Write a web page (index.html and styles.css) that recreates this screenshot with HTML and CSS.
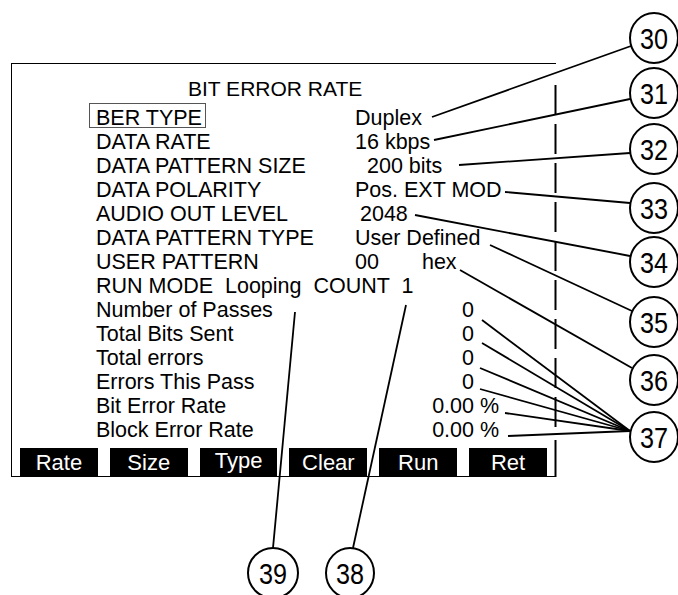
FILE: index.html
```html
<!DOCTYPE html>
<html lang="en">
<head>
	<meta charset="UTF-8">
	<title>Bit Error Rate</title>
	<link rel="stylesheet" href="styles.css">
</head>
<body>
	<div class="screen">
		<div class="title">BIT ERROR RATE</div>
		<div class="rows">
			<div class="row"><span><span class="sel">BER TYPE</span></span><span>Duplex</span></div>
			<div class="row"><span>DATA RATE</span><span>16 kbps</span></div>
			<div class="row"><span>DATA PATTERN SIZE</span><span class="shift-l">200 bits</span></div>
			<div class="row"><span>DATA POLARITY</span><span>Pos. EXT MOD</span></div>
			<div class="row"><span>AUDIO OUT LEVEL</span><span class="shift-s">2048</span></div>
			<div class="row"><span>DATA PATTERN TYPE</span><span>User Defined</span></div>
			<div class="row"><span>USER PATTERN</span><span>00<span class="unit-hex">hex</span></span></div>
			<div class="row run"><span>RUN MODE  Looping  COUNT  1</span></div>
			<div class="row stat"><span>Number of Passes</span><span class="num">0</span></div>
			<div class="row stat"><span>Total Bits Sent</span><span class="num">0</span></div>
			<div class="row stat"><span>Total errors</span><span class="num">0</span></div>
			<div class="row stat"><span>Errors This Pass</span><span class="num">0</span></div>
			<div class="row stat"><span>Bit Error Rate</span><span class="num">0.00</span><span class="pct">%</span></div>
			<div class="row stat"><span>Block Error Rate</span><span class="num">0.00</span><span class="pct">%</span></div>
		</div>
		<div class="keys">
			<div class="key">Rate</div>
			<div class="key">Size</div>
			<div class="key key-up">Type</div>
			<div class="key">Clear</div>
			<div class="key">Run</div>
			<div class="key">Ret</div>
		</div>
	</div>

	<!-- reference numerals and leader lines -->
	<svg class="callouts" width="678" height="595" viewBox="0 0 678 595">
		<g class="edge">
			<line x1="555.5" y1="85" x2="555.5" y2="430" stroke-dasharray="30 9"/>
			<line x1="555.5" y1="440" x2="555.5" y2="477"/>
		</g>
		<g class="leads">
			<line x1="432" y1="117" x2="631" y2="46"/>
			<line x1="434" y1="140" x2="630" y2="99"/>
			<line x1="459" y1="165" x2="630" y2="153"/>
			<line x1="505" y1="192" x2="630" y2="203"/>
			<line x1="415" y1="215" x2="630" y2="256"/>
			<line x1="490" y1="245" x2="632" y2="311"/>
			<line x1="460" y1="270" x2="632" y2="368"/>
			<line x1="482" y1="320" x2="630" y2="431"/>
			<line x1="482" y1="343" x2="630" y2="431"/>
			<line x1="480" y1="368" x2="630" y2="431"/>
			<line x1="480" y1="389" x2="630" y2="431"/>
			<line x1="505" y1="413" x2="630" y2="431"/>
			<line x1="508" y1="436" x2="630" y2="431"/>
			<line x1="406" y1="305" x2="353" y2="548"/>
			<line x1="295" y1="312" x2="273" y2="548"/>
		</g>
		<g class="marks">
			<ellipse cx="654" cy="38" rx="24" ry="25"/><text x="654" y="49" textLength="28" lengthAdjust="spacingAndGlyphs">30</text>
			<ellipse cx="654" cy="93" rx="24" ry="25"/><text x="654" y="104" textLength="28" lengthAdjust="spacingAndGlyphs">31</text>
			<ellipse cx="654" cy="149" rx="24" ry="25"/><text x="654" y="160" textLength="28" lengthAdjust="spacingAndGlyphs">32</text>
			<ellipse cx="654" cy="208" rx="24" ry="25"/><text x="654" y="219" textLength="28" lengthAdjust="spacingAndGlyphs">33</text>
			<ellipse cx="654" cy="262" rx="24" ry="25"/><text x="654" y="273" textLength="28" lengthAdjust="spacingAndGlyphs">34</text>
			<ellipse cx="654" cy="322" rx="24" ry="25"/><text x="654" y="333" textLength="28" lengthAdjust="spacingAndGlyphs">35</text>
			<ellipse cx="654" cy="380" rx="24" ry="25"/><text x="654" y="391" textLength="28" lengthAdjust="spacingAndGlyphs">36</text>
			<ellipse cx="654" cy="437" rx="24" ry="25"/><text x="654" y="448" textLength="28" lengthAdjust="spacingAndGlyphs">37</text>
			<ellipse cx="273" cy="573" rx="25" ry="25"/><text x="273" y="584" textLength="28" lengthAdjust="spacingAndGlyphs">39</text>
			<ellipse cx="350" cy="573" rx="24" ry="25"/><text x="350" y="584" textLength="28" lengthAdjust="spacingAndGlyphs">38</text>
		</g>
	</svg>
</body>
</html>
```

FILE: styles.css
```css
body{margin: 0;background: #fff;color: #000;font-family: "Liberation Sans", Arial, sans-serif;}
.screen{margin: 63px 0 0 11px;width: 544px;border-top: 1px solid #000;border-left: 1px solid #000;
	border-bottom: 1px solid #000;padding-top: 13px;}
.title{font-size: 21px;line-height: 24px;padding-left: 176px;margin-bottom: 5px;}
.rows{padding-left: 84px;font-size: 21.5px;line-height: 24px;}
.row{display: grid;grid-template-columns: 259px auto;height: 24px;white-space: pre;}
.row.stat{grid-template-columns: 259px 119px auto;}
.row.run{grid-template-columns: auto;}
.num{text-align: right;}
.pct{margin-left: 6px;}
.shift-l{padding-left: 12px;}
.shift-s{padding-left: 5px;}
.unit-hex{margin-left: 43px;}
.sel{display: inline-block;line-height: 18px;padding: 5px 3px 0 6px;margin: -4px 0 0 -7px;
	border: 1px solid #555;}
.keys{display: flex;gap: 12px;margin-top: 6px;padding: 0 9px 0 8px;}
.key{flex: 1;height: 28px;padding-top: 2px;box-sizing: border-box;line-height: 26px;background: #000;
	color: #fff;text-align: center;font-size: 22px;}
.key-up{padding-top: 0;}
.callouts{position: absolute;left: 0;top: 0;pointer-events: none;}
.callouts line{stroke: #000;stroke-width: 1.8;}
.callouts .edge line{stroke-width: 2;}
.callouts ellipse{fill: #fff;stroke: #000;stroke-width: 2;}
.callouts text{font-family: "Liberation Sans", Arial, sans-serif;font-size: 29px;text-anchor: middle;fill: #000;}
```
